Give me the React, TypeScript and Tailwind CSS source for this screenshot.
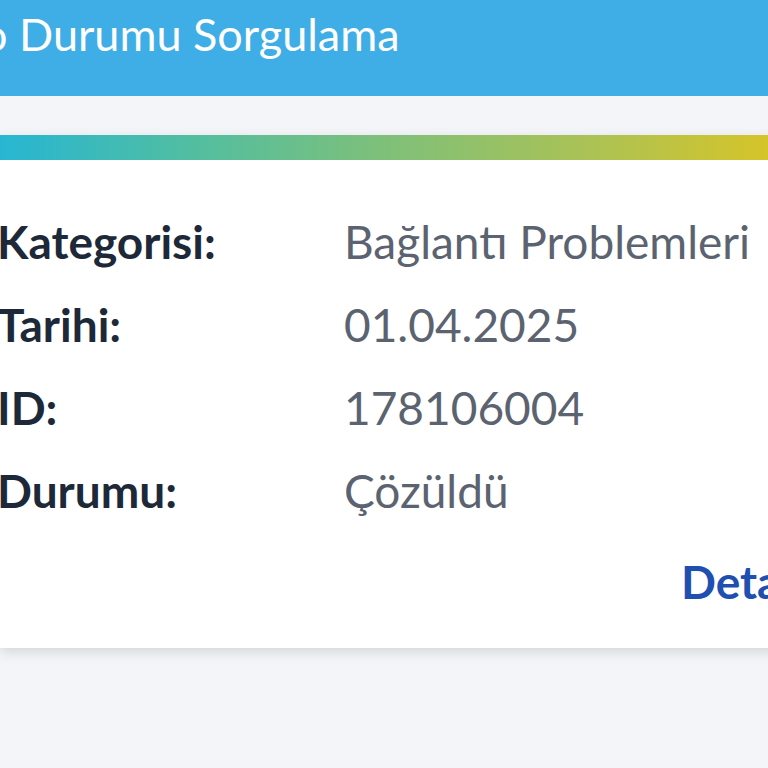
import React from "react";

const rows = [
  { label: "Kategorisi:", value: "Bağlantı Problemleri" },
  { label: "Tarihi:", value: "01.04.2025" },
  { label: "ID:", value: "178106004" },
  { label: "Durumu:", value: "Çözüldü" },
];

export default function App() {
  return (
    <div
      className="w-[768px] h-[768px] overflow-hidden bg-[#f4f5f8]"
      style={{ fontFamily: "Lato, 'Noto Sans', sans-serif" }}
    >
      <header className="h-[96px] bg-[#3faee6] flex items-start pt-[12px] overflow-hidden">
        <h1 className="ml-[-18px] text-[45px] leading-[45px] text-white whitespace-nowrap">
          o Durumu Sorgulama
        </h1>
      </header>

      <div className="pt-[39px]">
        <div className="w-[880px] bg-white shadow-[0_4px_12px_rgba(0,0,0,0.13)]">
          <div className="h-[25px] bg-[linear-gradient(to_right,#27b6d3_0%,#52bea0_22%,#7fc079_44%,#a9c257_66%,#d5c42a_87%,#d8c428_100%)]" />
          <div className="pt-[56px] pb-[40px]">
            <div className="flex flex-col gap-[31px]">
              {rows.map((r) => (
                <div key={r.label} className="flex items-baseline leading-[52px] whitespace-nowrap">
                  <span className="w-[347px] ml-[-3px] text-[46px] font-bold text-[#1d2939]">
                    {r.label}
                  </span>
                  <span className="text-[46px] text-[#5c6370]">{r.value}</span>
                </div>
              ))}
            </div>
            <div className="flex justify-end pr-[24px] mt-[39px]">
              <button className="text-[46px] leading-[52px] font-bold text-[#1f4fb0]">Detaylar</button>
            </div>
          </div>
        </div>
      </div>
    </div>
  );
}
